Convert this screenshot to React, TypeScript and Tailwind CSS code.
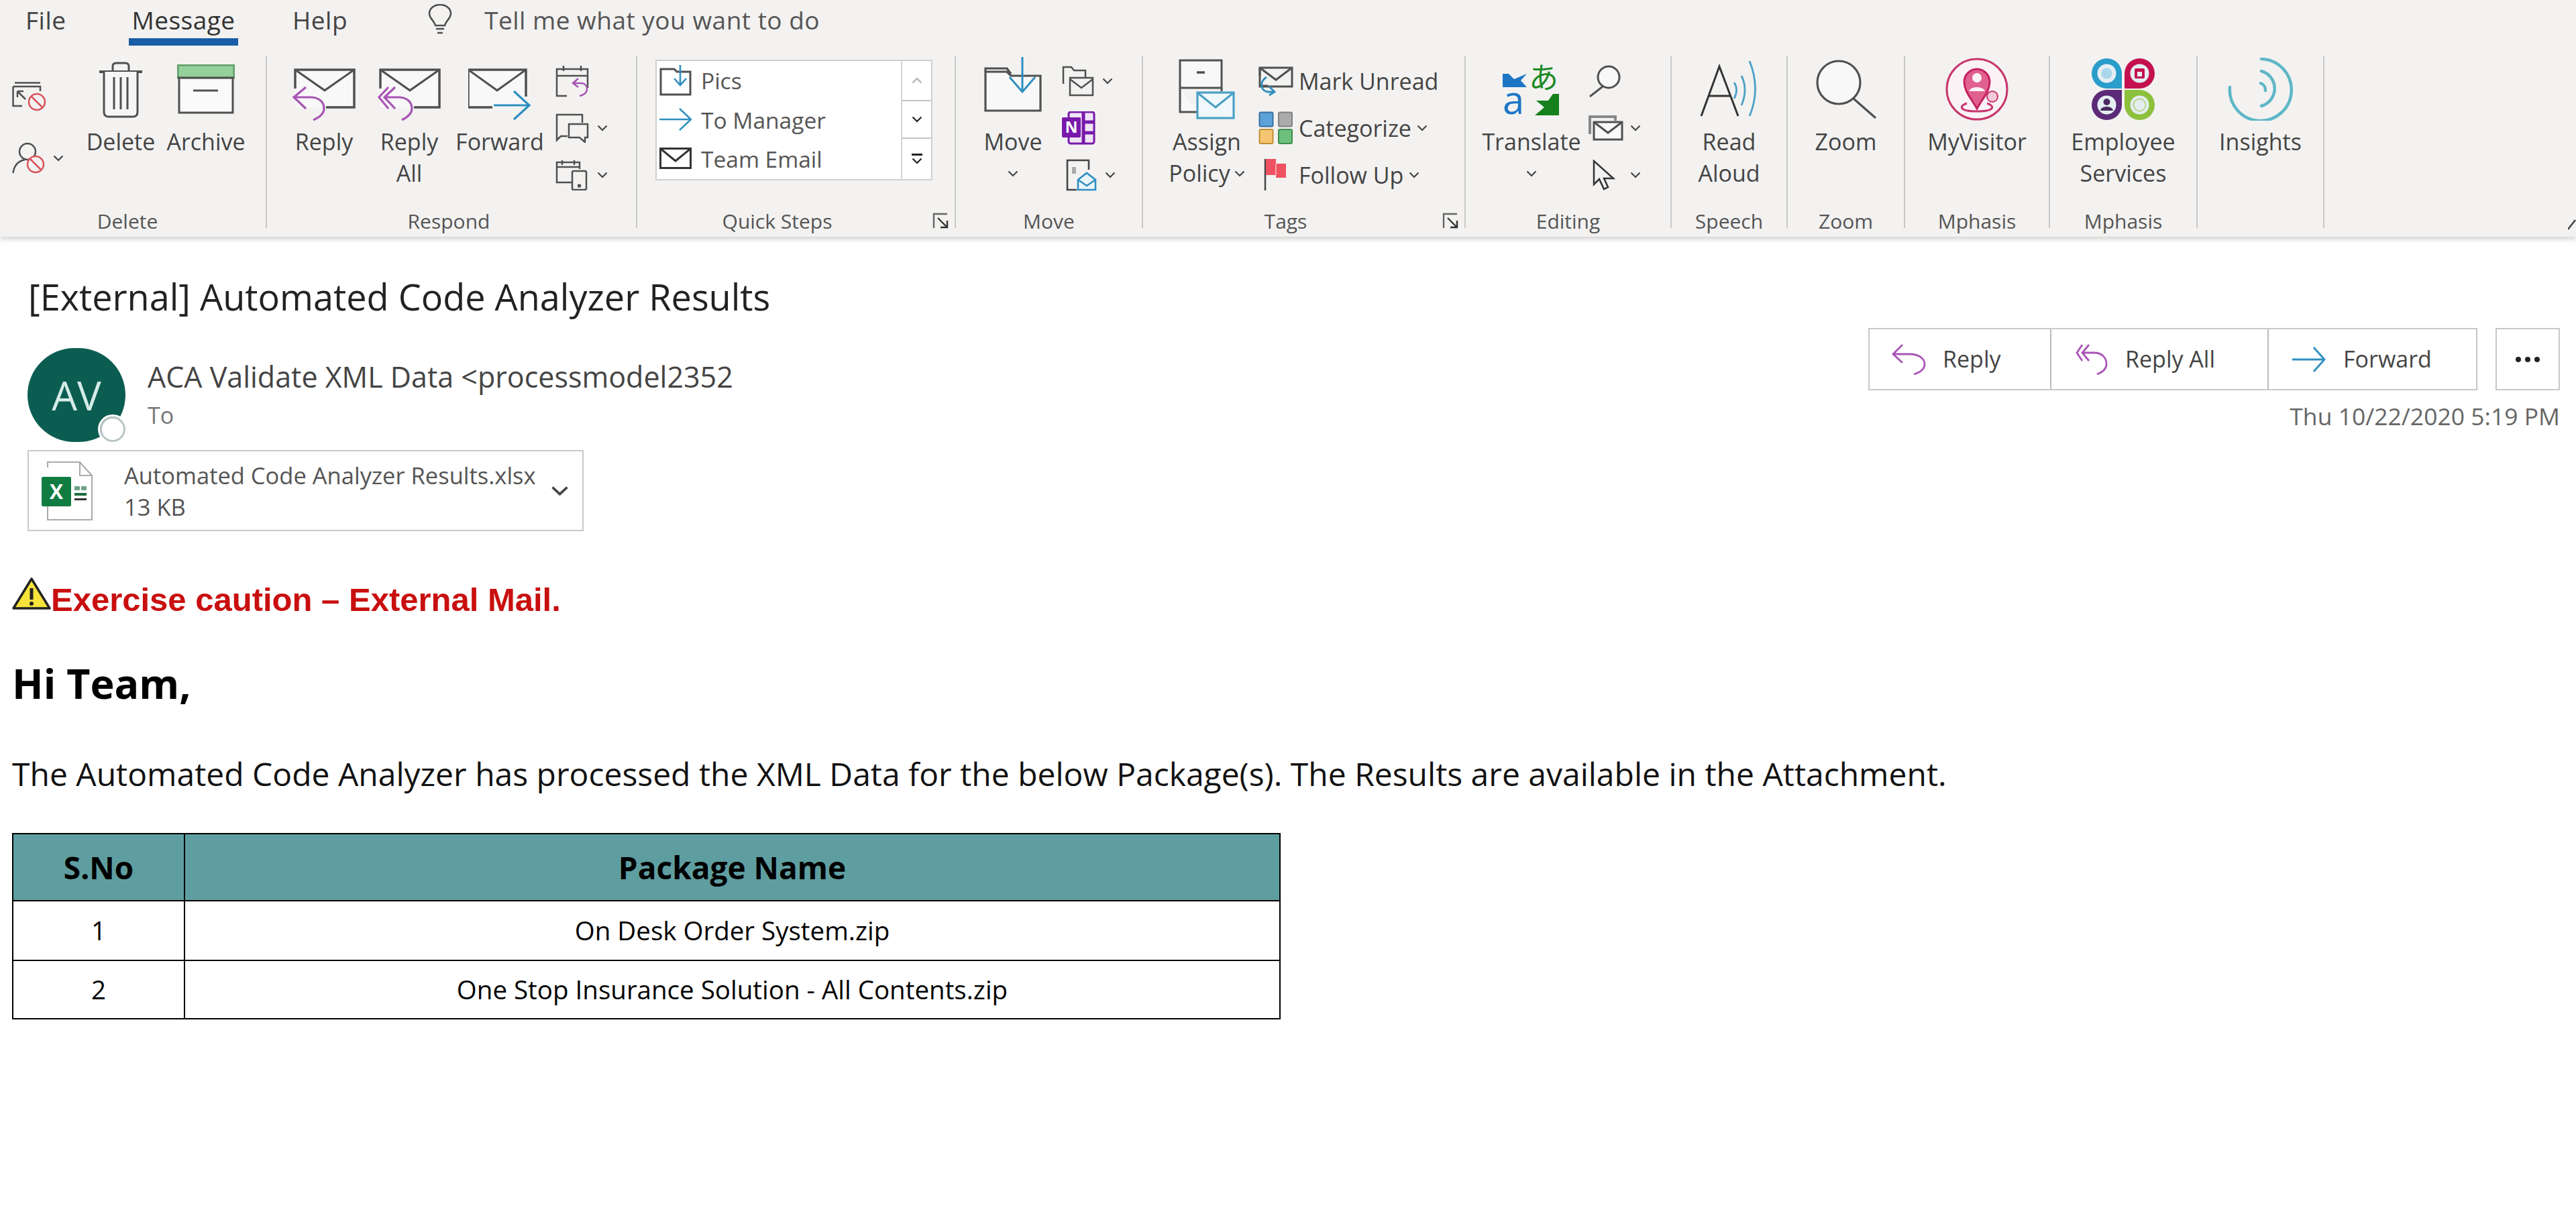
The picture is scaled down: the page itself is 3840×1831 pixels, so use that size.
import React from "react";

const G = "#505050";
const P = "#a855b5";
const B = "#2f8fc0";
const base = { fill: "none", stroke: G, strokeWidth: 3 } as const;

function Chev({ w = 16, h = 10, color = "#444" }: { w?: number; h?: number; color?: string }) {
  return (
    <svg width={w} height={h} viewBox="0 0 16 10" preserveAspectRatio="none" className="shrink-0">
      <path d="M1.5 1.5L8 8L14.5 1.5" fill="none" stroke={color} strokeWidth={2.2} />
    </svg>
  );
}

function Ignore() {
  return (
    <svg width={51} height={44} viewBox="0 0 51 44" {...base} strokeWidth={2.5}>
      <path d="M4 1.5H42M1.5 7H42V14M1.5 7V36H15" />
      <path d="M8 14L20 26M8 14h9M8 14v9" />
      <circle cx={37} cy={30} r={12} stroke="#d9535c" fill="#f3f2f1" />
      <path d="M29 22L45 38" stroke="#d9535c" />
    </svg>
  );
}
function Junk() {
  return (
    <svg width={50} height={48} viewBox="0 0 50 48" {...base} strokeWidth={2.5}>
      <circle cx={23} cy={14} r={12} />
      <path d="M1.5 46C3 34 10 28 19 26" />
      <circle cx={35} cy={33} r={12} stroke="#d9535c" fill="#f3f2f1" />
      <path d="M27 25L43 41" stroke="#d9535c" />
    </svg>
  );
}
function Trash() {
  return (
    <svg width={64} height={85} viewBox="0 0 64 85" {...base}>
      <path d="M0 16H64" strokeWidth={4} />
      <path d="M20 14V8q0-5 5-5h14q5 0 5 5v6" />
      <path d="M7 16V76q0 7 7 7H50q7 0 7-7V16" fill="#f6f6f6" />
      <path d="M22 24V72M32 24V72M42 24V72" />
    </svg>
  );
}
function Archive() {
  return (
    <svg width={86} height={74} viewBox="0 0 86 74" {...base}>
      <rect x={3} y={19} width={80} height={53} fill="#fafafa" />
      <rect x={1} y={1} width={84} height={19} fill="#95d19a" stroke="#5f9f68" />
      <path d="M1 20H85" />
      <path d="M24 39H61" />
    </svg>
  );
}
function Env({ x = 0, y = 0, w = 88, h = 56, gap = "" }: { x?: number; y?: number; w?: number; h?: number; gap?: string }) {
  return (
    <g transform={`translate(${x} ${y})`}>
      <rect width={w} height={h} fill="#f8f8f8" stroke="none" />
      <path d={gap || `M0 ${h}V0H${w}V${h}H0`} {...base} strokeWidth={3.5} />
      <path d={`M0 0L${w / 2} ${h * 0.55}L${w} 0`} {...base} />
    </g>
  );
}
function ReplyBig() {
  return (
    <svg width={94} height={78} viewBox="0 0 94 78" fill="none">
      <Env x={4} y={2} gap="M0 28V0H88V56H46" />
      <path d="M20 28L2 43L20 60M2 43H26C40 43 47 50 47 60C47 67 40 73 31 77" stroke={P} strokeWidth={3.2} />
    </svg>
  );
}
function ReplyAllBig() {
  return (
    <svg width={94} height={78} viewBox="0 0 94 78" fill="none">
      <Env x={4} y={2} gap="M0 28V0H88V56H50" />
      <path d="M16 28L2 43L16 60M26 28L10 43L26 60M10 43H30C44 43 51 50 51 60C51 67 44 73 36 77" stroke={P} strokeWidth={3.2} />
    </svg>
  );
}
function ForwardBig() {
  return (
    <svg width={94} height={78} viewBox="0 0 94 78" fill="none">
      <Env y={2} w={86} gap="M0 56V0H86V40M0 56H36" />
      <path d="M38 55H90M68 34L91 55L68 76" stroke={B} strokeWidth={3.2} />
    </svg>
  );
}
function MeetingSm() {
  return (
    <svg width={50} height={48} viewBox="0 0 50 48" {...base} strokeWidth={2.5}>
      <path d="M17 46H2V6H48V34M2 16H48M12 1V9M38 1V9" />
      <path d="M34 20L26 27L34 33M26 27H38C44 27 47 31 47 36C47 41 42 45 36 46" stroke={P} />
    </svg>
  );
}
function ImSm() {
  return (
    <svg width={50} height={44} viewBox="0 0 50 44" {...base} strokeWidth={2.5}>
      <path d="M18 34H8L2 40V2H40V14" />
      <path d="M20 16H48V36H44V43L36 36H20Z" fill="#f3f2f1" />
    </svg>
  );
}
function MoreSm() {
  return (
    <svg width={48} height={46} viewBox="0 0 48 46" {...base} strokeWidth={2.5}>
      <path d="M26 34H2V4H36V14M2 11H36" />
      <path d="M10 1V8M28 1V8" />
      <rect x={25} y={17} width={21} height={28} rx={2} fill="#f3f2f1" />
      <circle cx={35.5} cy={39} r={1.5} fill={G} />
    </svg>
  );
}
function Launcher() {
  return (
    <svg width={24} height={24} viewBox="0 0 24 24" {...base} strokeWidth={2.4}>
      <path d="M2 23V2H22" stroke="#666" />
      <path d="M8 8L22 22M22 12V22H12" stroke="#333" />
    </svg>
  );
}
function PicsIcon() {
  return (
    <svg width={48} height={46} viewBox="0 0 48 46" fill="none">
      <path d="M2 44V6H22L26 10H46V44Z" stroke={G} strokeWidth={3} />
      <path d="M31 0V30M22 20L31 30L40 20" stroke={B} strokeWidth={2.6} />
    </svg>
  );
}
function ArrowSm() {
  return (
    <svg width={48} height={34} viewBox="0 0 48 34" fill="none">
      <path d="M0 17H46M30 1L47 17L30 33" stroke={B} strokeWidth={2.6} />
    </svg>
  );
}
function EnvSm() {
  return (
    <svg width={48} height={32} viewBox="0 0 48 32" fill="none" stroke="#333" strokeWidth={3}>
      <rect x={1.5} y={1.5} width={45} height={29} />
      <path d="M2 2L24 20L46 2" />
    </svg>
  );
}
function MoveBig() {
  return (
    <svg width={86} height={82} viewBox="0 0 86 82" fill="none">
      <path d="M2 80V22H34L40 28H84V80Z" fill="#f8f8f8" stroke={G} strokeWidth={3.2} />
      <path d="M2 22V17H34L40 25" stroke={G} strokeWidth={3.2} />
      <path d="M57 0V52M38 30L57 52L76 30" stroke={B} strokeWidth={3} />
    </svg>
  );
}
function MoveSm() {
  return (
    <svg width={48} height={46} viewBox="0 0 48 46" {...base} strokeWidth={2.5}>
      <path d="M2 27V2H14L18 7H35V18" />
      <rect x={12} y={18} width={34} height={26} fill="#f3f2f1" />
      <path d="M12 20L29 33L46 20" />
    </svg>
  );
}
function OneNote() {
  return (
    <svg width={50} height={50} viewBox="0 0 50 50">
      <rect x={10} y={1} width={38} height={47} rx={3} fill="#efe4f4" stroke="#7719aa" strokeWidth={3} />
      <path d="M32 2V48M34 16H48M34 32H48" stroke="#7719aa" strokeWidth={5} />
      <rect x={0} y={9} width={28} height={30} rx={2} fill="#7719aa" />
      <text x={14} y={32} textAnchor="middle" fill="#fff" fontSize={23} fontWeight={700} fontFamily="'Open Sans',sans-serif">N</text>
    </svg>
  );
}
function Rules() {
  return (
    <svg width={46} height={48} viewBox="0 0 46 48" fill="none">
      <path d="M16 46H2V2H34V16" stroke="#444" strokeWidth={2.6} />
      <rect x={9} y={12} width={6} height={10} fill="#aaa" />
      <path d="M18 46V31L31 21L44 31V46Z" fill="#eaf5fa" stroke={B} strokeWidth={2.6} />
      <path d="M18 31L31 40L44 31" stroke={B} strokeWidth={2.6} />
    </svg>
  );
}
function Cabinet() {
  return (
    <svg width={84} height={90} viewBox="0 0 84 90" fill="none">
      <rect x={2} y={2} width={62} height={41} fill="#f8f8f8" stroke={G} strokeWidth={3} />
      <path d="M2 43V79H28" stroke={G} strokeWidth={3} fill="#f8f8f8" />
      <path d="M64 43V48" stroke={G} strokeWidth={3} />
      <path d="M27 20H39" stroke={G} strokeWidth={3.5} />
      <rect x={28} y={50} width={54} height={38} fill="#f0f8fb" stroke="#4ba0c6" strokeWidth={3.2} />
      <path d="M29 51L55 72L81 51" stroke="#4ba0c6" strokeWidth={3.2} />
    </svg>
  );
}
function MarkUnread() {
  return (
    <svg width={52} height={44} viewBox="0 0 52 44" fill="none">
      <path d="M14 29H2M2 2V14" stroke={G} strokeWidth={3} />
      <rect x={2} y={2} width={48} height={28} stroke={G} strokeWidth={3} />
      <path d="M2 2L26 20L50 2" stroke={G} strokeWidth={3} />
      <path d="M12 16C2 22 2 36 14 38M12 38H24M16 30L24 38L16 43" stroke={B} strokeWidth={2.8} />
    </svg>
  );
}
function Categorize() {
  return (
    <svg width={52} height={50} viewBox="0 0 52 50">
      <rect x={1.5} y={1.5} width={20} height={21} rx={2} fill="#5da2d9" stroke="#3a6f9f" strokeWidth={2} />
      <rect x={30} y={1.5} width={20} height={21} rx={2} fill="#ababab" stroke="#808080" strokeWidth={2} />
      <rect x={1.5} y={27} width={20} height={21} rx={2} fill="#f5c672" stroke="#c18e33" strokeWidth={2} />
      <rect x={30} y={27} width={20} height={21} rx={2} fill="#6cc07c" stroke="#3f8d4f" strokeWidth={2} />
    </svg>
  );
}
function FlagIcon() {
  return (
    <svg width={36} height={48} viewBox="0 0 36 48">
      <path d="M2 0V47" stroke="#444" strokeWidth={2.5} />
      <path d="M3 0H18V7H33V28H18V24H3Z" fill="#ee5260" />
      <path d="M18 7V24" stroke="#f7a3aa" strokeWidth={2} />
    </svg>
  );
}
function Translate() {
  return (
    <svg width={86} height={86} viewBox="0 0 86 86">
      <polygon points="0,20 9,20 17,28 36,20 27,30 36,40 0,40" fill="#1c76c4" />
      <polygon points="84,50 84,82 48,82 62,70 50,60 68,60 75,50" fill="#15801c" />
      <text x={0} y={80} fontSize={58} fill="#1c76c4" fontFamily="'Open Sans',sans-serif">a</text>
      <text x={39} y={42} fontSize={44} fill="#1c8a24" fontFamily="'Noto Sans CJK JP',sans-serif">あ</text>
    </svg>
  );
}
function FindIcon() {
  return (
    <svg width={50} height={48} viewBox="0 0 50 48" fill="none" stroke={G} strokeWidth={3}>
      <circle cx={30} cy={18} r={16} fill="#f8f8f8" />
      <path d="M21 32L2 47" />
    </svg>
  );
}
function MailStack() {
  return (
    <svg width={52} height={38} viewBox="0 0 52 38" fill="none" stroke={G} strokeWidth={3}>
      <path d="M2 28V2H40V8" stroke="#888" strokeWidth={4} />
      <rect x={8} y={10} width={42} height={26} fill="#f8f8f8" />
      <path d="M8 10L29 26L50 10" />
    </svg>
  );
}
function Cursor() {
  return (
    <svg width={34} height={46} viewBox="0 0 34 46" fill="none" stroke="#333" strokeWidth={2.5}>
      <path d="M2 2V37L10 29L17 44L23 41L17 28H31Z" />
    </svg>
  );
}
function ReadAloud() {
  return (
    <svg width={88} height={84} viewBox="0 0 88 84" fill="none">
      <path d="M2 82L29 8L57 82M13 52H46" stroke="#333" strokeWidth={3} />
      <path d="M55 32Q62 42 55 56M66 22Q76 42 66 66M78 0Q95 42 78 82" stroke="#4ba0c6" strokeWidth={2.8} transform="translate(-4 0)" />
    </svg>
  );
}
function ZoomIcon() {
  return (
    <svg width={90} height={88} viewBox="0 0 90 88" fill="none" stroke={G} strokeWidth={3.2}>
      <circle cx={34} cy={34} r={32} fill="#f8f8f8" />
      <path d="M56 58L89 87" />
    </svg>
  );
}
function MyVisitor() {
  return (
    <svg width={94} height={94} viewBox="0 0 94 94" fill="none">
      <circle cx={47} cy={47} r={45} fill="#fbf2f5" stroke="#c7376e" strokeWidth={3} />
      <path d="M47 76C38 60 28 50 28 36A19 19 0 0 1 66 36C66 50 56 60 47 76Z" fill="#e0608e" stroke="#c4215f" strokeWidth={3} />
      <circle cx={47} cy={30} r={7} fill="#fbf2f5" />
      <path d="M35 50C38 42 56 42 59 50" fill="#fbf2f5" />
      <path d="M32 68C20 72 20 80 47 80S74 72 62 68" stroke="#c7376e" strokeWidth={3} />
      <circle cx={70} cy={58} r={8} fill="#f3cad8" stroke="#c7376e" strokeWidth={2} />
    </svg>
  );
}
function Petal({ c, rot, tx, ty, children }: { c: string; rot: number; tx: number; ty: number; children?: React.ReactNode }) {
  return (
    <g transform={`translate(${tx} ${ty})`}>
      <path transform={`rotate(${rot} 22.5 22.5)`} d="M22.5 0A22.5 22.5 0 0 1 45 22.5V45H22.5A22.5 22.5 0 0 1 22.5 0Z" fill={c} />
      <circle cx={22.5} cy={22.5} r={14} fill="#e4eef2" />
      {children}
    </g>
  );
}
function Employee() {
  return (
    <svg width={96} height={94} viewBox="0 0 96 94">
      <Petal c="#2a9dcb" rot={0} tx={1} ty={1}><circle cx={22.5} cy={22.5} r={8} fill="#a9d6ea" /></Petal>
      <Petal c="#c4104f" rot={90} tx={50} ty={1}><rect x={15} y={15} width={15} height={15} rx={2} fill="#c4104f" /><rect x={19} y={20} width={7} height={7} fill="#e4eef2" /></Petal>
      <Petal c="#5c2a78" rot={-90} tx={1} ty={48}><circle cx={22.5} cy={18} r={5} fill="#4a2a60" /><path d="M13 31C14 23 31 23 32 31Z" fill="#4a2a60" /></Petal>
      <Petal c="#8dc03c" rot={180} tx={50} ty={48}><circle cx={22.5} cy={22.5} r={9} fill="none" stroke="#b7d687" strokeWidth={2} /></Petal>
    </svg>
  );
}
function Insights() {
  return (
    <svg width={98} height={94} viewBox="0 0 98 94" fill="none" stroke="#5fb7c6" strokeWidth={4.5} strokeLinecap="round">
      <path d="M50 2A46 46 0 1 1 3 44" />
      <path d="M50 20A27 27 0 0 1 50 72" />
      <path d="M49 38A11 11 0 0 1 56 49" />
    </svg>
  );
}
function ExcelIcon() {
  return (
    <svg width={78} height={90} viewBox="0 0 78 90">
      <path d="M10 24V88H76V22L58 2H10V10" fill="#fff" stroke="#aaa" strokeWidth={2} />
      <path d="M58 2V22H76" fill="none" stroke="#aaa" strokeWidth={2} />
      <rect x={50} y={38} width={8} height={6} fill="#6fa287" />
      <rect x={60} y={38} width={8} height={6} fill="#6fa287" />
      <rect x={50} y={48} width={18} height={4} fill="#1c6b3f" />
      <rect x={50} y={56} width={18} height={3} fill="#333" />
      <rect x={1} y={24} width={44} height={44} rx={2} fill="#107c41" />
      <text x={23} y={57} textAnchor="middle" fill="#fff" fontSize={30} fontWeight={700} fontFamily="'Open Sans',sans-serif">X</text>
    </svg>
  );
}
function Warn() {
  return (
    <svg width={58} height={50} viewBox="0 0 58 50">
      <path d="M29 3L56 47H2Z" fill="#f7e33a" stroke="#222" strokeWidth={3.5} strokeLinejoin="round" />
      <path d="M29 17V34" stroke="#222" strokeWidth={5} />
      <circle cx={29} cy={40} r={3} fill="#222" />
    </svg>
  );
}
function ReplySm() {
  return (
    <svg width={52} height={46} viewBox="0 0 52 46" fill="none" stroke={P} strokeWidth={2.8}>
      <path d="M16 1L2 15L16 28M2 15H26C40 15 49 21 49 30C49 37 43 42 33 45" />
    </svg>
  );
}
function ReplyAllSm() {
  return (
    <svg width={50} height={46} viewBox="0 0 50 46" fill="none" stroke={P} strokeWidth={2.8}>
      <path d="M10 1L2 13L10 25M20 1L10 13L20 25M10 13H28C40 13 46 21 46 30C46 37 40 42 32 45" />
    </svg>
  );
}
function ForwardSm() {
  return (
    <svg width={50} height={40} viewBox="0 0 50 40" fill="none" stroke={B} strokeWidth={2.8}>
      <path d="M0 20H47M32 2L48 20L32 38" />
    </svg>
  );
}

function BigBtn({ icon, a, b, w }: { icon: React.ReactNode; a: string; b?: React.ReactNode; w: string }) {
  return (
    <div className={`flex flex-col items-center ${w}`}>
      <div className="flex h-[102px] w-full items-center justify-center pb-[8px]">{icon}</div>
      <div className="text-center text-[34px] leading-[47px] text-[#444]">{a}</div>
      {b && <div className="flex h-[47px] items-center justify-center gap-[6px] text-[34px] text-[#444]">{b}</div>}
    </div>
  );
}
function Small({ children }: { children: React.ReactNode }) {
  return <div className="flex h-[70px] items-center">{children}</div>;
}
function Group({ w, label, pl, lab, children }: { w: string; label?: string; pl?: string; lab?: string; children: React.ReactNode }) {
  return (
    <section className={`relative flex h-[257px] shrink-0 flex-col border-r-2 border-[#c8c8c8] ${w}`}>
      <div className={`flex flex-1 items-start pt-[3px] ${pl ?? ""}`}>{children}</div>
      {label && <div className={`h-5 text-center text-[30px] leading-5 text-[#555] ${lab ?? ""}`}>{label}</div>}
    </section>
  );
}

export default function App() {
  return (
    <div className="h-[1831px] w-[3840px] overflow-hidden bg-white font-['Open_Sans',sans-serif]">
      <header className="relative h-[353px] bg-[#f3f2f1] shadow-[0_3px_8px_rgba(0,0,0,0.2)]">
        <nav className="flex h-[83px] items-start text-[37px] tracking-[0.5px] text-[#444]">
          <div className="ml-[38px] flex h-[60px] w-[60px] items-center">File</div>
          <div className="ml-[94px] flex h-[68px] w-[163px] items-center justify-center whitespace-nowrap border-b-[11px] border-[#1a5da6] pt-[3px] text-[#333]">Message</div>
          <div className="ml-[81px] flex h-[60px] w-[81px] items-center">Help</div>
          <svg width={38} height={48} viewBox="0 0 38 48" fill="none" stroke={G} strokeWidth={2.6} className="ml-[120px] mt-[6px] shrink-0">
            <path d="M12 32C10 24 3 22 3 14A16 13 0 0 1 35 14C35 22 28 24 26 32ZM13 37H25M15 43H23" />
          </svg>
          <div className="ml-[47px] flex h-[60px] items-center whitespace-nowrap text-[#555]">Tell me what you want to do</div>
        </nav>
        <div className="flex">
          <Group w="w-[398px]" label="Delete" lab="pr-[16px]">
            <div className="flex w-[122px] shrink-0 flex-col pl-[18px]">
              <div className="flex h-[80px] items-end"><Ignore /></div>
              <div className="mt-[46px] flex items-center gap-[11px]"><Junk /><Chev /></div>
            </div>
            <BigBtn w="w-[116px]" icon={<Trash />} a="Delete" />
            <BigBtn w="w-[138px]" icon={<Archive />} a="Archive" />
          </Group>
          <Group w="w-[552px]" label="Respond" lab="pr-[8px]" pl="pl-[25px]">
            <BigBtn w="w-[120px]" icon={<div className="pt-[16px]"><ReplyBig /></div>} a="Reply" />
            <BigBtn w="w-[134px]" icon={<div className="pt-[16px]"><ReplyAllBig /></div>} a="Reply" b="All" />
            <BigBtn w="w-[136px]" icon={<div className="pt-[16px]"><ForwardBig /></div>} a="Forward" />
            <div className="ml-[15px] flex flex-col">
              <Small><MeetingSm /></Small>
              <Small><div className="flex items-center gap-[12px]"><ImSm /><Chev /></div></Small>
              <Small><div className="flex items-center gap-[14px]"><MoreSm /><Chev /></div></Small>
            </div>
          </Group>
          <Group w="w-[475px]" label="Quick Steps" lab="pr-[56px]" pl="pl-[27px]">
            <div className="mt-[3px] flex h-[180px] w-[413px] border-2 border-[#cfcfcf] bg-white">
              <div className="flex w-[366px] flex-col text-[33.5px] text-[#555]">
                <div className="flex h-[58px] items-center gap-[14px] pl-[4px]"><PicsIcon /><span className="pt-[1px]">Pics</span></div>
                <div className="flex h-[58px] items-center gap-[14px] pl-[4px]"><ArrowSm /><span className="pt-[2px]">To Manager</span></div>
                <div className="flex h-[58px] items-center gap-[14px] pl-[4px]"><EnvSm /><span className="pt-[3px]">Team Email</span></div>
              </div>
              <div className="flex w-[45px] flex-col border-l-2 border-[#d4d4d4]">
                <div className="flex h-[60px] items-center justify-center border-b-2 border-[#c4c4c4]"><svg width={16} height={10} viewBox="0 0 16 10"><path d="M1.5 8.5L8 2L14.5 8.5" fill="none" stroke="#bbb" strokeWidth={2.6} /></svg></div>
                <div className="flex h-[56px] items-center justify-center border-b-2 border-[#c4c4c4]"><Chev color="#222" /></div>
                <div className="flex flex-1 flex-col items-center justify-center gap-[3px]"><div className="h-[3px] w-[16px] bg-[#222]" /><Chev color="#222" /></div>
              </div>
            </div>
            <div className="absolute right-[9px] top-[234px]"><Launcher /></div>
          </Group>
          <Group w="w-[279px]" label="Move" pl="pl-[25px]">
            <BigBtn w="w-[120px]" icon={<div className="pb-[14px]"><MoveBig /></div>} a="Move" b={<Chev />} />
            <div className="ml-[13px] flex flex-col">
              <Small><div className="flex items-center gap-[12px]"><MoveSm /><Chev /></div></Small>
              <Small><OneNote /></Small>
              <Small><div className="flex items-center gap-[12px] pl-[6px]"><Rules /><Chev /></div></Small>
            </div>
          </Group>
          <Group w="w-[481px]" label="Tags" lab="pr-[54px]" pl="pl-[30px]">
            <BigBtn w="w-[130px]" icon={<Cabinet />} a="Assign" b={<>Policy<Chev /></>} />
            <div className="ml-[12px] flex flex-col whitespace-nowrap text-[34px] text-[#444]">
              <Small><div className="flex items-center gap-[8px]"><MarkUnread />Mark Unread</div></Small>
              <Small><div className="flex items-center gap-[8px]"><Categorize />Categorize<Chev /></div></Small>
              <Small><div className="flex items-center gap-[8px] pl-[8px]"><div className="w-[44px]"><FlagIcon /></div>Follow Up<Chev /></div></Small>
            </div>
            <div className="absolute right-[9px] top-[234px]"><Launcher /></div>
          </Group>
          <Group w="w-[307px]" label="Editing" pl="pl-[38px]">
            <BigBtn w="w-[120px]" icon={<Translate />} a="Translate" b={<Chev />} />
            <div className="ml-[25px] flex flex-col">
              <Small><FindIcon /></Small>
              <Small><div className="flex items-center gap-[10px]"><MailStack /><Chev /></div></Small>
              <Small><div className="flex items-center gap-[22px] pl-[6px]"><Cursor /><Chev /></div></Small>
            </div>
          </Group>
          <Group w="w-[173px]" label="Speech" pl="justify-center">
            <BigBtn w="w-[130px]" icon={<ReadAloud />} a="Read" b="Aloud" />
          </Group>
          <Group w="w-[175px]" label="Zoom" pl="justify-center">
            <BigBtn w="w-[130px]" icon={<ZoomIcon />} a="Zoom" />
          </Group>
          <Group w="w-[216px]" label="Mphasis" pl="justify-center">
            <BigBtn w="w-[170px]" icon={<MyVisitor />} a="MyVisitor" />
          </Group>
          <Group w="w-[220px]" label="Mphasis" pl="justify-center">
            <BigBtn w="w-[180px]" icon={<Employee />} a="Employee" b="Services" />
          </Group>
          <Group w="w-[189px]" pl="justify-center">
            <BigBtn w="w-[150px]" icon={<Insights />} a="Insights" />
          </Group>
        </div>
        <svg width={12} height={16} viewBox="0 0 12 16" className="absolute right-0 top-[327px]">
          <path d="M0 15L11 1" stroke="#444" strokeWidth={2.6} />
        </svg>
      </header>

      <main>
        <h1 className="mt-[59px] h-[60px] whitespace-nowrap pl-[42px] text-[54px] font-normal leading-[60px] text-[#222]">[External] Automated Code Analyzer Results</h1>
        <div className="mt-[17px] flex justify-between pl-[41px] pr-[24px]">
          <div>
            <div className="mt-[30px] flex">
              <div className="relative flex h-[140px] w-[146px] items-center justify-center rounded-full bg-[#0b5d52] text-[60px] text-[#d5ebe6]">
                AV
                <div className="absolute bottom-0 right-0 h-[38px] w-[38px] rounded-full border-[3px] border-[#b9c4c4] bg-white outline-[3px] outline-white" />
              </div>
              <div className="ml-[33px] pt-[17px]">
                <div className="h-[52px] whitespace-nowrap text-[43px] leading-[52px] text-[#444]">ACA Validate XML Data &lt;processmodel2352</div>
                <div className="mt-[8px] text-[34px] leading-[46px] text-[#777]">To</div>
              </div>
            </div>
            <div className="mt-[12px] flex h-[121px] w-[829px] items-center border-2 border-[#c9c9c9] pl-[18px]">
              <ExcelIcon />
              <div className="ml-[46px] w-[636px] whitespace-nowrap text-[34.5px] leading-[47px] text-[#555]">
                <div>Automated Code Analyzer Results.xlsx</div>
                <div>13 KB</div>
              </div>
              <Chev w={27} h={16} />
            </div>
          </div>
          <div className="flex flex-col items-end">
            <div className="flex gap-[27px]">
              <div className="flex h-[93px] w-[908px] border-2 border-[#c8c8c8] text-[34px] text-[#444]">
                <div className="flex w-[271px] items-center gap-[24px] border-r-2 border-[#bbb] pl-[33px]"><ReplySm />Reply</div>
                <div className="flex w-[324px] items-center gap-[24px] border-r-2 border-[#bbb] pl-[36px]"><ReplyAllSm />Reply All</div>
                <div className="flex flex-1 items-center gap-[26px] pl-[35px]"><ForwardSm />Forward</div>
              </div>
              <div className="flex h-[93px] w-[96px] items-center justify-center gap-[6px] border-2 border-[#c8c8c8]">
                <div className="h-[8px] w-[8px] rounded-full bg-[#222]" />
                <div className="h-[8px] w-[8px] rounded-full bg-[#222]" />
                <div className="h-[8px] w-[8px] rounded-full bg-[#222]" />
              </div>
            </div>
            <div className="mt-[18px] whitespace-nowrap text-[35.5px] leading-[40px] text-[#666]">Thu 10/22/2020 5:19 PM</div>
          </div>
        </div>
        <div className="mt-[68px] flex h-[60px] items-start pl-[18px]">
          <Warn />
          <span className="mt-[4px] whitespace-nowrap font-['Liberation_Sans',sans-serif] text-[49px] font-bold leading-[60px] text-[#c90f0f]">Exercise caution – External Mail.</span>
        </div>
        <div className="mt-[64px] h-[70px] pl-[18px] text-[61px] font-bold leading-[70px] text-black">Hi Team,</div>
        <p className="mt-[70px] h-[60px] whitespace-nowrap pl-[18px] text-[48px] leading-[60px] text-[#111]">The Automated Code Analyzer has processed the XML Data for the below Package(s). The Results are available in the Attachment.</p>
        <table className="ml-[18px] mt-[58px] w-[1891px] border-collapse border-2 border-black text-center text-black">
          <thead>
            <tr className="h-[100px] bg-[#5f9ea0] text-[46px]">
              <th className="w-[256px] border-2 border-black font-bold">S.No</th>
              <th className="border-2 border-black font-bold">Package Name</th>
            </tr>
          </thead>
          <tbody className="text-[38.5px]">
            <tr className="h-[89px]"><td className="border-2 border-black">1</td><td className="border-2 border-black">On Desk Order System.zip</td></tr>
            <tr className="h-[87px]"><td className="border-2 border-black">2</td><td className="border-2 border-black">One Stop Insurance Solution - All Contents.zip</td></tr>
          </tbody>
        </table>
      </main>
    </div>
  );
}
